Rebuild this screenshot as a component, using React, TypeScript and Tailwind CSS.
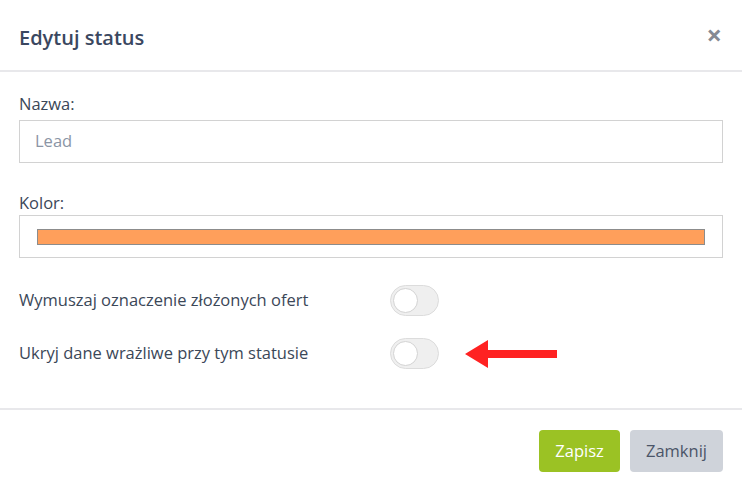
import React from "react";

const Toggle = () => (
  <div className="relative h-[31px] w-[49px] rounded-full border border-[#dcdcdc] bg-[#efefef]">
    <div className="absolute left-[2px] top-[2px] h-[25px] w-[25px] rounded-full border border-[#d3d3d3] bg-white" />
  </div>
);

const App = () => {
  return (
    <div
      className="flex h-[491px] w-[742px] flex-col bg-white text-[#3b4758]"
      style={{ fontFamily: '"Open Sans", sans-serif' }}
    >
      <header className="flex h-[72px] items-center justify-between border-b-2 border-[#e8e8eb] pl-[19px] pr-[20px] pt-[5px]">
        <h1 className="text-[20px] font-semibold text-[#3a4760]">Edytuj status</h1>
        <span className="-mt-[6px] text-[27px] font-bold leading-none text-[#858a93]">×</span>
      </header>

      <div className="flex flex-col px-[19px] pt-[20px] text-[16.5px]">
        <label className="leading-6">Nazwa:</label>
        <div className="mt-1 flex h-[43px] items-center border border-[#d2d2d2] px-[15px] text-[#8b95a5]">
          Lead
        </div>

        <label className="mt-[28px] leading-6">Kolor:</label>
        <div className="mt-[0px] flex h-[43px] items-center border border-[#d2d2d2] px-[17px]">
          <div className="h-[16px] w-full border border-[#8c8c8c] bg-[#ff9f5b]" />
        </div>

        <div className="mt-[27px] flex items-center">
          <span className="w-[371px]">Wymuszaj oznaczenie złożonych ofert</span>
          <Toggle />
        </div>
        <div className="mt-[22px] flex items-center">
          <span className="w-[371px]">Ukryj dane wrażliwe przy tym statusie</span>
          <Toggle />
          <svg className="ml-[26px]" width="92" height="28" viewBox="0 0 92 28">
            <polygon points="0,14 23,0 23,10 92,10 92,18 23,18 23,28" fill="#ff2222" />
          </svg>
        </div>
      </div>

      <footer className="mt-[39px] flex justify-end gap-[10px] border-t-2 border-[#e8e8eb] pr-[19px] pt-[20px]">
        <button className="h-[42px] w-[81px] rounded-[4px] bg-[#9bc224] text-[16.5px] text-white">Zapisz</button>
        <button className="h-[42px] w-[93px] rounded-[4px] bg-[#cfd3da] text-[16.5px] text-[#4b5568]">Zamknij</button>
      </footer>
    </div>
  );
};

export default App;
